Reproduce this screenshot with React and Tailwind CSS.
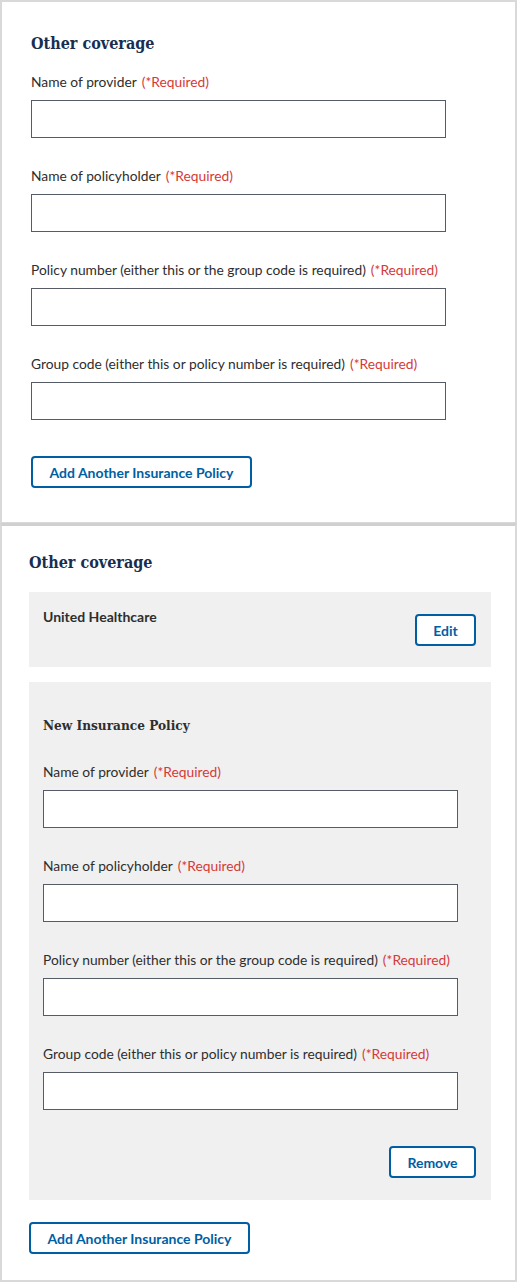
import React from "react";

const sans = { fontFamily: "Lato, 'Noto Sans', sans-serif" };
const serif = { fontFamily: "'DejaVu Serif Condensed', 'DejaVu Serif', serif" };

function Field({ label, first }) {
  return (
    <div className={first ? "" : "mt-[28px]"}>
      <div className="h-5 leading-5 text-[13.8px] text-[#2e2e2e]">
        {label}
        <span className="ml-[5px] text-[#d43a3a]">(*Required)</span>
      </div>
      <div className="mt-2 h-[38px] w-[415px] border border-[#565c65] bg-white" />
    </div>
  );
}

function Fields() {
  return (
    <>
      <Field first label="Name of provider" />
      <Field label="Name of policyholder" />
      <Field label="Policy number (either this or the group code is required)" />
      <Field label="Group code (either this or policy number is required)" />
    </>
  );
}

function OutlineButton({ children, className = "" }) {
  return (
    <button
      className={
        "h-[32px] rounded-[4px] border-2 border-[#005ea2] bg-white text-[14px] font-bold text-[#005ea2] " +
        className
      }
      style={sans}
    >
      {children}
    </button>
  );
}

export default function App() {
  return (
    <div className="w-[517px] bg-white" style={sans}>
      <section className="border-2 border-[#d9d9d9] pl-[29px] pt-[30px] pb-[34px]">
        <h2 className="h-6 leading-6 text-[16px] font-bold text-[#162e51]" style={serif}>
          Other coverage
        </h2>
        <div className="mt-4">
          <Fields />
        </div>
        <OutlineButton className="mt-[36px] w-[221px]">Add Another Insurance Policy</OutlineButton>
      </section>
      <section className="border-2 border-t-[3px] border-[#d9d9d9] border-t-[#d0d0d0] -mt-[1px] pl-[27px] pt-[25px] pb-[26px]">
        <h2 className="h-6 leading-6 text-[16px] font-bold text-[#162e51]" style={serif}>
          Other coverage
        </h2>
        <div className="mt-[17px] w-[462px] flex items-start justify-between bg-[#f0f0f0] pl-[14px] pr-[15px] h-[75px]">
          <div className="mt-[15px] h-5 leading-5 text-[14px] font-bold text-[#2e2e2e]">United Healthcare</div>
          <OutlineButton className="mt-[22px] w-[61px] h-[31px]">Edit</OutlineButton>
        </div>
        <div className="mt-[15px] w-[462px] bg-[#f0f0f0] pl-[14px] pr-[15px] pt-[33px] pb-[22px]">
          <h3 className="h-5 leading-5 text-[13.5px] font-bold text-[#2e2e2e]" style={serif}>
            New Insurance Policy
          </h3>
          <div className="mt-[27px]">
            <Fields />
          </div>
          <div className="mt-[36px] flex justify-end">
            <OutlineButton className="w-[87px]">Remove</OutlineButton>
          </div>
        </div>
        <OutlineButton className="mt-[22px] w-[221px]">Add Another Insurance Policy</OutlineButton>
      </section>
    </div>
  );
}
